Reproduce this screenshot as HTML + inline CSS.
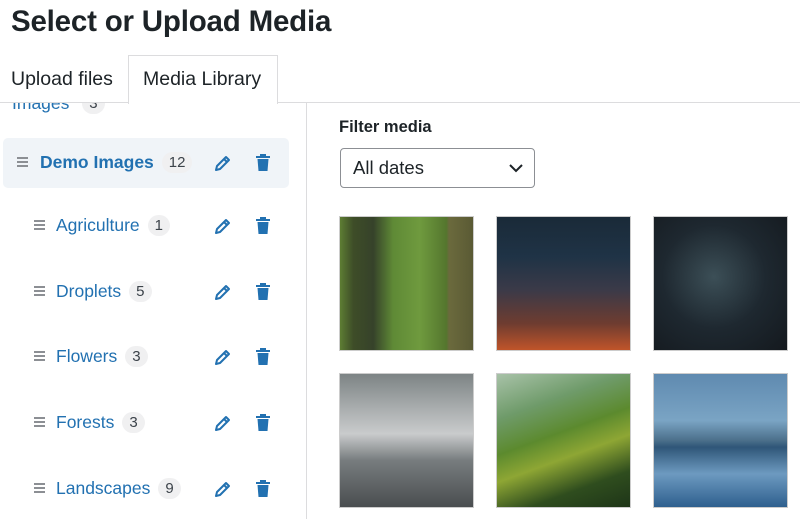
<!DOCTYPE html>
<html><head><style>
*{box-sizing:border-box;margin:0;padding:0}
body{width:800px;height:519px;overflow:hidden;background:#fff;font-family:"Liberation Sans",sans-serif;position:relative;color:#1d2327}
.abs{position:absolute}
h1{position:absolute;left:11px;top:5px;font-size:29.5px;font-weight:600;color:#1d2327;letter-spacing:-0.2px}
.tabline{left:0;top:102px;width:800px;height:1px;background:#dcdcde}
.tab{font-size:19.5px;color:#1d2327}
.side{left:306px;top:103px;width:1px;height:416px;background:#dcdcde}
.row{position:absolute;left:3px;width:286px;height:50px}
.row .h{position:absolute;top:19px;width:11px;height:10px;border-top:2px solid #8c8f94;border-bottom:2px solid #8c8f94}
.row .h:after{content:"";position:absolute;left:0;top:2px;width:11px;height:2px;background:#8c8f94}
.row .n{position:absolute;top:14px;font-size:17.5px;color:#2271b1}
.badge{display:inline-block;background:#f0f0f1;color:#3c434a;border-radius:11px;font-size:15px;padding:2px 7px;margin-left:8px;vertical-align:1px;font-weight:400}
.img{position:absolute;width:135px;height:135px;border:1px solid #ccc}
</style></head><body>
<h1>Select or Upload Media</h1>
<div class="abs tab" style="left:11px;top:68px">Upload files</div>
<div class="abs" style="left:128px;top:55px;width:150px;height:49px;border:1px solid #dcdcde;border-bottom:none;background:#fff;z-index:2"></div>
<div class="abs tab" style="left:143px;top:68px;z-index:3">Media Library</div>
<div class="abs tabline"></div>
<div class="abs" style="left:12px;top:103px;width:200px;font-size:17.5px;color:#2271b1;height:12px;overflow:hidden;z-index:1"><span style="position:absolute;left:0;top:-10px;white-space:nowrap">Images <span class="badge">3</span></span></div>
<div class="abs side"></div>

<div class="row" style="top:138px;background:#f0f4f8;border-radius:5px">
<div class="h" style="left:14px"></div><div class="n" style="left:37px;font-weight:700">Demo Images<span class="badge">12</span></div>
</div>
<div class="row" style="top:201px"><div class="h" style="left:31px"></div><div class="n" style="left:53px">Agriculture<span class="badge">1</span></div></div>
<div class="row" style="top:267px"><div class="h" style="left:31px"></div><div class="n" style="left:53px">Droplets<span class="badge">5</span></div></div>
<div class="row" style="top:332px"><div class="h" style="left:31px"></div><div class="n" style="left:53px">Flowers<span class="badge">3</span></div></div>
<div class="row" style="top:398px"><div class="h" style="left:31px"></div><div class="n" style="left:53px">Forests<span class="badge">3</span></div></div>
<div class="row" style="top:464px"><div class="h" style="left:31px"></div><div class="n" style="left:53px">Landscapes<span class="badge">9</span></div></div>

<svg class="abs" style="left:0;top:0" width="300" height="519">
<defs>
<g id="pen"><path d="M2 15 L3 11 L12 2 L15 5 L6 14 Z M10 4 L13 7" fill="none" stroke="#2271b1" stroke-width="2" stroke-linejoin="round"/></g>
<g id="trash"><rect x="1" y="2" width="14" height="2" fill="#2271b1"/><rect x="5" y="0" width="6" height="3" fill="#2271b1"/><path d="M2.5 5 H13.5 L12.5 17 H3.5 Z" fill="#2271b1"/></g>
</defs>
<use href="#pen" x="214" y="155"/><use href="#trash" x="255" y="154"/>
<use href="#pen" x="214" y="218"/><use href="#trash" x="255" y="217"/>
<use href="#pen" x="214" y="284"/><use href="#trash" x="255" y="283"/>
<use href="#pen" x="214" y="349"/><use href="#trash" x="255" y="348"/>
<use href="#pen" x="214" y="415"/><use href="#trash" x="255" y="414"/>
<use href="#pen" x="214" y="481"/><use href="#trash" x="255" y="480"/>
</svg>

<div class="abs" style="left:339px;top:118px;font-size:16.5px;font-weight:600">Filter media</div>
<div class="abs" style="left:340px;top:148px;width:195px;height:40px;border:1px solid #8c8f94;border-radius:4px"></div>
<div class="abs" style="left:353px;top:157px;font-size:18.5px">All dates</div>
<svg class="abs" style="left:508px;top:162px" width="16" height="12"><path d="M2 3 L8 9 L14 3" fill="none" stroke="#1d2327" stroke-width="2"/></svg>

<div class="img" style="left:339px;top:216px;background:linear-gradient(90deg,#5d7d33 0%,#3e4d28 10%,#36422a 25%,#5f8a36 40%,#6f9a3e 60%,#54762e 80%,#6b6a3d 82%,#5a5a34 100%)"></div>
<div class="img" style="left:496px;top:216px;background:linear-gradient(180deg,#1a2a38 0%,#1f3346 30%,#3b3a48 55%,#6e3c30 80%,#c0542a 100%)"></div>
<div class="img" style="left:653px;top:216px;background:radial-gradient(ellipse at 45% 45%,#3c4f57 0%,#1e2830 50%,#14191e 100%)"></div>
<div class="img" style="left:339px;top:373px;background:linear-gradient(180deg,#7d8485 0%,#a8acad 25%,#c9cbcc 45%,#777c7e 65%,#4a4e50 100%)"></div>
<div class="img" style="left:496px;top:373px;background:linear-gradient(160deg,#a8c2a8 0%,#6f9b6a 25%,#5c8a2e 45%,#8ea634 60%,#2f4d1e 80%,#1e3518 100%)"></div>
<div class="img" style="left:653px;top:373px;background:linear-gradient(180deg,#5f8ab0 0%,#7aa4c4 35%,#4b6f8a 50%,#2f5678 55%,#6d9ac0 75%,#2e5f8e 100%)"></div>
</body></html>
